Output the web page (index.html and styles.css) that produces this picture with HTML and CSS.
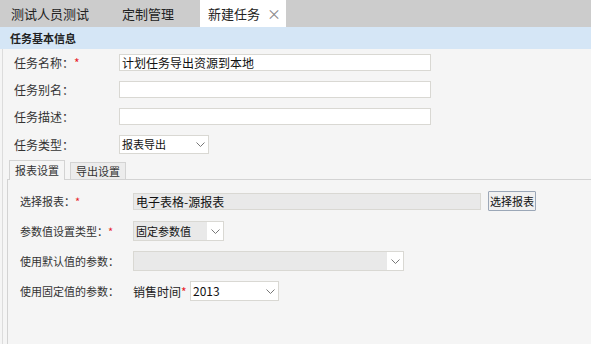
FILE: index.html
```html
<!DOCTYPE html>
<html lang="zh-CN">
<head>
    <meta charset="UTF-8">
    <title>新建任务</title>
    <link rel="stylesheet" href="styles.css">
</head>
<body>
    <div class="tabbar">
        <div class="tab">测试人员测试</div>
        <div class="tab">定制管理</div>
        <div class="tab active">新建任务<span class="close">×</span></div>
    </div>
    <div class="section-title">任务基本信息</div>

    <div class="content">
        <div class="form">
            <div class="row">
                <label>任务名称：<em>*</em></label>
                <div class="field">计划任务导出资源到本地</div>
            </div>
            <div class="row">
                <label>任务别名：</label>
                <div class="field"></div>
            </div>
            <div class="row">
                <label>任务描述：</label>
                <div class="field"></div>
            </div>
            <div class="row type-row">
                <label>任务类型：</label>
                <div class="combo type-combo">
                    <span class="combo-text">报表导出</span>
                    <span class="combo-arrow"><svg width="9" height="5" viewBox="0 0 9 5"><polyline points="0.5,0.5 4.5,4.5 8.5,0.5"/></svg></span>
                </div>
            </div>
        </div>

        <div class="subtabs">
            <div class="subtab active">报表设置</div>
            <div class="subtab">导出设置</div>
        </div>
        <div class="panel">
            <div class="prow">
                <label>选择报表：<em>*</em></label>
                <div class="field gray report-field">电子表格-源报表</div>
                <button class="pick-btn">选择报表</button>
            </div>
            <div class="prow">
                <label>参数值设置类型：<em>*</em></label>
                <div class="combo gray param-combo">
                    <span class="combo-text">固定参数值</span>
                    <span class="combo-arrow"><svg width="9" height="5" viewBox="0 0 9 5"><polyline points="0.5,0.5 4.5,4.5 8.5,0.5"/></svg></span>
                </div>
            </div>
            <div class="prow">
                <label>使用默认值的参数：</label>
                <div class="combo gray default-combo">
                    <span class="combo-text"></span>
                    <span class="combo-arrow"><svg width="9" height="5" viewBox="0 0 9 5"><polyline points="0.5,0.5 4.5,4.5 8.5,0.5"/></svg></span>
                </div>
            </div>
            <div class="prow">
                <label>使用固定值的参数：</label>
                <span class="param-name">销售时间<em>*</em></span>
                <div class="combo year-combo">
                    <span class="combo-text">2013</span>
                    <span class="combo-arrow"><svg width="9" height="5" viewBox="0 0 9 5"><polyline points="0.5,0.5 4.5,4.5 8.5,0.5"/></svg></span>
                </div>
            </div>
        </div>
    </div>
</body>
</html>
```

FILE: styles.css
```css
* {
    box-sizing: border-box;
}

html, body {
    height: 100%;
}

body {
    display: flex;
    flex-direction: column;
    margin: 0;
    overflow: hidden;
    font-family: "Noto Sans CJK SC", "Noto Sans", sans-serif;
    color: #333;
    background-color: #f5f5f5;
}

em {
    font-style: normal;
    color: #e8232a;
}

/* top tabs */
.tabbar {
    display: flex;
    flex-shrink: 0;
    height: 27px;
    padding-left: 3px;
    background-color: #cccccc;
}

.tab {
    padding: 0 8px;
    margin-right: 17px;
    font-size: 13px;
    line-height: 27px;
    white-space: nowrap;
    color: #222;
}

.tab.active {
    width: 86px;
    margin-left: 1px;
    background-color: #fff;
}

.close {
    margin-left: 7px;
    font-size: 14px;
    color: #888;
}

.section-title {
    flex-shrink: 0;
    height: 22px;
    padding-left: 10px;
    font-size: 11px;
    font-weight: bold;
    line-height: 22px;
    color: #222;
    background-color: #d5e6f6;
}

.content {
    display: flex;
    flex-direction: column;
    flex: 1;
    margin-left: 2px;
    border-left: 1px solid #dcdcdc;
}

/* basic info */
.form {
    padding: 5px 0 0 11px;
}

.row {
    display: flex;
    align-items: center;
    height: 17px;
    margin-bottom: 10px;
}

.row label {
    width: 105px;
    font-size: 12px;
}

.field {
    width: 312px;
    height: 17px;
    padding-left: 2px;
    font-size: 12px;
    line-height: 15px;
    color: #111;
    background-color: #fff;
    border: 1px solid #d9d8d3;
}

.field.gray {
    background-color: #e9e9e9;
}

.type-row {
    height: 19px;
    margin-top: 2px;
    margin-bottom: 0;
}

.combo {
    display: flex;
    height: 20px;
    background-color: #fff;
    border: 1px solid #d9d8d3;
}

.combo-text {
    flex: 1;
    padding-left: 2px;
    font-size: 11px;
    line-height: 18px;
    color: #111;
}

.combo.gray .combo-text {
    background-color: #e9e9e9;
}

.combo-arrow {
    display: flex;
    align-items: center;
    justify-content: center;
    width: 16px;
    background-color: #fff;
}

.combo-arrow polyline {
    fill: none;
    stroke: #777;
    stroke-width: 1;
}

.type-combo {
    width: 90px;
    height: 19px;
}

.type-combo .combo-text {
    line-height: 17px;
}

/* report tabs */
.subtabs {
    display: flex;
    align-items: flex-end;
    gap: 5px;
    height: 19px;
    margin: 6px 0 0 6px;
}

.subtab {
    height: 17px;
    padding: 0 5px;
    font-size: 11px;
    line-height: 16px;
    background-color: #ececec;
    border: 1px solid #d3d3d3;
    border-bottom: none;
}

.subtab.active {
    position: relative;
    z-index: 1;
    height: 20px;
    margin-bottom: -1px;
    line-height: 18px;
    background-color: #f5f5f5;
}

.panel {
    flex: 1;
    margin-left: 4px;
    padding: 11px 0 0 12px;
    border-top: 1px solid #d3d3d3;
    border-left: 1px solid #d3d3d3;
}

.prow {
    display: flex;
    align-items: center;
    height: 20px;
    margin-bottom: 10px;
}

.prow label {
    width: 113px;
    font-size: 11px;
}

.report-field {
    width: 348px;
    font-size: 12px;
}

.pick-btn {
    width: 48px;
    height: 20px;
    margin-left: 7px;
    padding: 0;
    font-family: inherit;
    font-size: 11px;
    color: #111;
    background-color: #f0f0f0;
    border: 1px solid #9ba7b7;
    border-radius: 1px;
}

.param-combo {
    width: 91px;
}

.default-combo {
    width: 271px;
}

.param-name {
    width: 57px;
    font-size: 12px;
    color: #222;
}

.year-combo {
    width: 89px;
}

.year-combo .combo-text {
    font-size: 12px;
}
```
